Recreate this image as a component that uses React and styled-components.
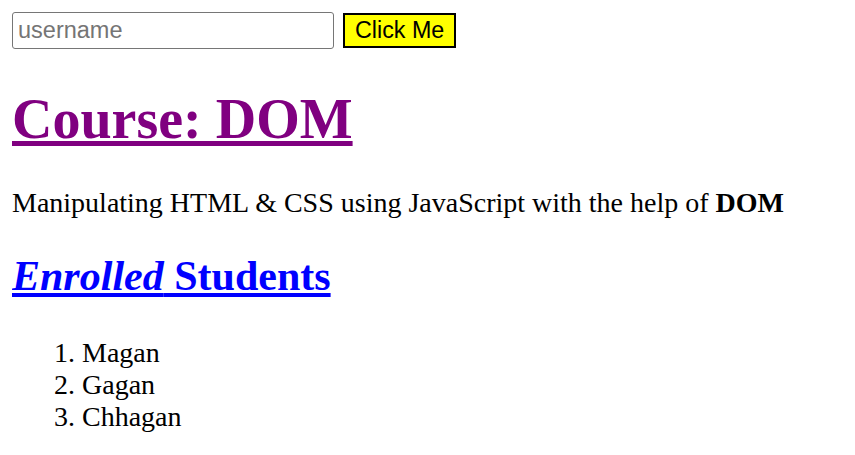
import React from 'react';
import styled, { createGlobalStyle } from 'styled-components';

const GlobalStyle = createGlobalStyle`
    body {
        margin: 12px;
        font-family: "Liberation Serif", "Times New Roman", serif;
        font-size: 28px;
        color: #000;
        background: #fff;
    }
`;

const Toolbar = styled.div`
    display: flex;
    align-items: center;
    gap: 9px;
`;

const Input = styled.input`
    box-sizing: border-box;
    width: 322px;
    height: 37px;
    padding: 1px 5px;
    border: 1px solid #767676;
    border-radius: 3px;
    font-family: "Liberation Sans", Arial, sans-serif;
    font-size: 23.5px;
    &::placeholder {
        color: #757575;
    }
`;

const Button = styled.button`
    box-sizing: border-box;
    height: 35px;
    padding: 0 10px;
    border: 2px solid #000;
    border-radius: 0;
    background: yellow;
    color: #000;
    font-family: "Liberation Sans", Arial, sans-serif;
    font-size: 23.3px;
    cursor: pointer;
`;

const Title = styled.h1`
    margin: 37.5px 0 36.5px;
    font-size: 56px;
    font-weight: bold;
    color: purple;
    text-decoration: underline;
`;

const Text = styled.p`
    margin: 1em 0;
`;

const SubTitle = styled.h2`
    margin: 33px 0 37px;
    font-size: 42px;
    font-weight: bold;
    color: blue;
    text-decoration: underline;
`;

const List = styled.ol`
    margin: 1em 0;
    padding-left: 70px;
`;

const students = ['Magan', 'Gagan', 'Chhagan'];

const App = () => {
    return (
        <>
            <GlobalStyle />
            <Toolbar>
                <Input type="text" placeholder="username" />
                <Button>Click Me</Button>
            </Toolbar>
            <Title>Course: DOM</Title>
            <Text>
                Manipulating HTML &amp; CSS using JavaScript with the help of <b>DOM</b>
            </Text>
            <SubTitle>
                <i>Enrolled</i> Students
            </SubTitle>
            <List>
                {students.map((name) => (
                    <li key={name}>{name}</li>
                ))}
            </List>
        </>
    );
};

export default App;
